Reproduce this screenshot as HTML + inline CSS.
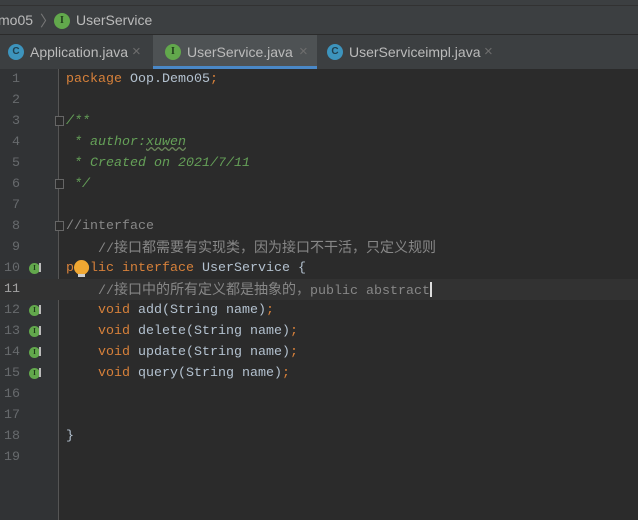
<!DOCTYPE html>
<html><head><meta charset="utf-8">
<style>
*{margin:0;padding:0;box-sizing:border-box}
html,body{width:638px;height:520px;overflow:hidden}
body{background:#2b2b2b;position:relative;font-family:"Liberation Sans","Noto Sans CJK SC",sans-serif}
.top{position:absolute;left:0;top:0;width:638px;height:6px;background:#3c3f41;border-bottom:1px solid #323232}
.crumb{position:absolute;left:0;top:6px;width:638px;height:29px;background:#3c3f41;border-bottom:1px solid #2b2b2b;color:#bbbbbb;font-size:14px}
.tabs{position:absolute;left:0;top:35px;width:638px;height:34px;background:#3c3f41}
.tab{position:absolute;top:0;height:34px;color:#bbbbbb;font-size:14px;line-height:34px}
.ic{position:absolute;width:16px;height:16px;border-radius:50%;color:#2b2b2b;font:bold 10px "Liberation Sans",sans-serif;text-align:center;line-height:16px}
.ii{background:#62a84c;color:#1f3a1a;font-family:"Liberation Serif",serif}
.ic.c{background:#3d94bd;color:#20404f}
.x{position:absolute;color:#6e6e6e;font-size:15px}
.gut{position:absolute;left:0;top:69px;width:59px;height:451px;background:#313335;border-right:1px solid #555}
.cur{position:absolute;left:0;top:279px;width:638px;height:21px;background:#323232}
.code{position:absolute;left:0;top:69px;font-family:"Liberation Mono","Noto Sans CJK SC",monospace;font-size:13.33px;line-height:21px;white-space:pre;color:#b3c1cf}
.ln{position:absolute;left:0;width:20px;text-align:right;color:#676a6d;font-family:"Liberation Mono",monospace;font-size:13.33px;line-height:21px}
.l{position:absolute;left:66px;height:21px;white-space:pre}
.k{color:#d6803a}.cm{color:#878787}.d{color:#65a058;font-style:italic}
.cj{font-family:"Noto Sans CJK SC",sans-serif;font-size:14px}
.gi{position:absolute;left:29px;width:11px;height:11px;border-radius:50%;background:#62a84c;color:#1f3a1a;font:bold 7px "Liberation Serif",serif;text-align:center;line-height:11px}
.ar{position:absolute;left:39px;width:2px;height:9px;background:#bbb}
.fold{position:absolute;left:55px;width:9px;height:10px;border:1px solid #666;background:#2b2b2b}
</style></head><body>
<div class="top"></div>
<div class="crumb">
 <span style="position:absolute;left:-2px;top:6px">mo05</span>
 <span style="position:absolute;left:40px;top:4px;color:#777;font-size:15px">〉</span>
 <div class="ic ii" style="left:54px;top:7px">I</div>
 <span style="position:absolute;left:76px;top:6px">UserService</span>
</div>
<div class="tabs">
 <div class="tab" style="left:0;width:152px">
  <div class="ic c" style="left:8px;top:9px">C</div>
  <span style="position:absolute;left:30px">Application.java</span>
  <span class="x" style="left:132px;top:0">×</span>
 </div>
 <div class="tab" style="left:153px;width:164px;background:#4e5254">
  <div class="ic ii" style="left:12px;top:9px">I</div>
  <span style="position:absolute;left:34px">UserService.java</span>
  <span class="x" style="left:146px">×</span>
  <div style="position:absolute;left:0;bottom:0;width:164px;height:3px;background:#4a88c7"></div>
 </div>
 <div class="tab" style="left:318px;width:200px">
  <div class="ic c" style="left:9px;top:9px">C</div>
  <span style="position:absolute;left:31px">UserServiceimpl.java</span>
  <span class="x" style="left:166px">×</span>
 </div>
</div>
<div class="gut"></div>
<div class="cur"></div>
<div style="position:absolute;left:0;top:279px;width:59px;height:21px;background:#323232"></div>
<div class="code">
<div class="ln" style="top:0">1</div><div class="ln" style="top:21px">2</div><div class="ln" style="top:42px">3</div><div class="ln" style="top:63px">4</div><div class="ln" style="top:84px">5</div><div class="ln" style="top:105px">6</div><div class="ln" style="top:126px">7</div><div class="ln" style="top:147px">8</div><div class="ln" style="top:168px">9</div><div class="ln" style="top:189px">10</div><div class="ln" style="top:210px;color:#a4a3a3">11</div><div class="ln" style="top:231px">12</div><div class="ln" style="top:252px">13</div><div class="ln" style="top:273px">14</div><div class="ln" style="top:294px">15</div><div class="ln" style="top:315px">16</div><div class="ln" style="top:336px">17</div><div class="ln" style="top:357px">18</div><div class="ln" style="top:378px">19</div>
<div class="gi" style="top:194px">I</div><div class="ar" style="top:194px"></div>
<div class="gi" style="top:236px">I</div><div class="ar" style="top:236px"></div>
<div class="gi" style="top:257px">I</div><div class="ar" style="top:257px"></div>
<div class="gi" style="top:278px">I</div><div class="ar" style="top:278px"></div>
<div class="gi" style="top:299px">I</div><div class="ar" style="top:299px"></div>
<div class="fold" style="top:47px"></div><div class="fold" style="top:110px"></div><div class="fold" style="top:152px"></div>
<div class="l" style="top:0"><span class="k">package</span> Oop.Demo05<span class="k">;</span></div>
<div class="l" style="top:42px"><span class="d">/**</span></div>
<div class="l" style="top:63px"><span class="d"> * author:<span style="text-decoration:underline wavy #6a8759">xuwen</span></span></div>
<div class="l" style="top:84px"><span class="d"> * Created on 2021/7/11</span></div>
<div class="l" style="top:105px"><span class="d"> */</span></div>
<div class="l" style="top:147px"><span class="cm">//interface</span></div>
<div class="l" style="top:168px"><span class="cm">    //<span class="cj">接口都需要有实现类，因为接口不干活，只定义规则</span></span></div>
<div class="l" style="top:189px"><span class="k">public interface</span> UserService {</div>
<div style="position:absolute;left:74px;top:191px;width:15px;height:15px;border-radius:50%;background:#f0a732"></div>
<div style="position:absolute;left:78px;top:205px;width:7px;height:3px;background:#ccc"></div>
<div class="l" style="top:210px"><span class="cm">    //<span class="cj">接口中的所有定义都是抽象的，</span>public abstract</span><span style="display:inline-block;width:2px;height:15px;background:#ddd;vertical-align:-3px"></span></div>
<div class="l" style="top:231px">    <span class="k">void</span> add(String name)<span class="k">;</span></div>
<div class="l" style="top:252px">    <span class="k">void</span> delete(String name)<span class="k">;</span></div>
<div class="l" style="top:273px">    <span class="k">void</span> update(String name)<span class="k">;</span></div>
<div class="l" style="top:294px">    <span class="k">void</span> query(String name)<span class="k">;</span></div>
<div class="l" style="top:357px">}</div>
</div>
</body></html>
